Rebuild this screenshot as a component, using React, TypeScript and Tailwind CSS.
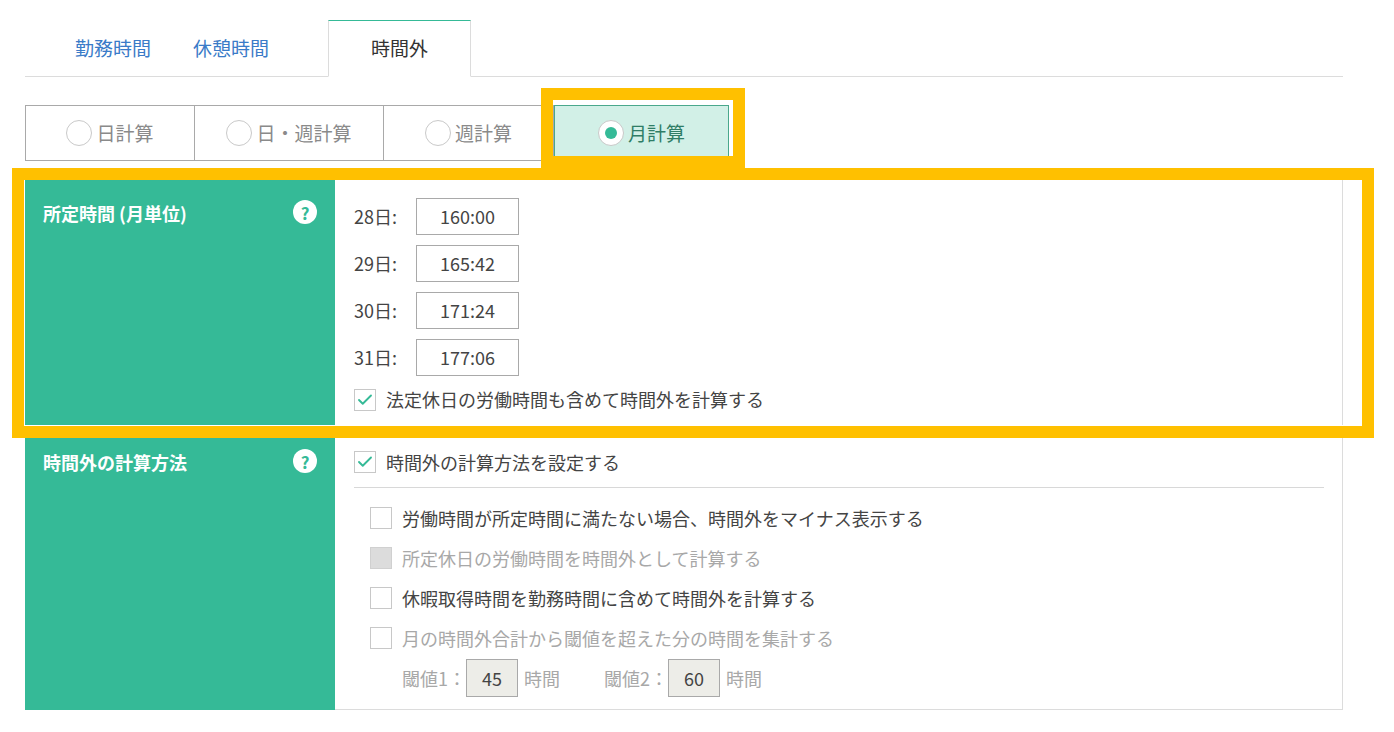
import { Check } from 'lucide-react'

const font = { fontFamily: '"Noto Sans CJK JP", "Noto Sans", sans-serif' }

function Radio({ label, checked }: { label: string; checked?: boolean }) {
  return (
    <div
      className={`flex items-center justify-center gap-1 h-full border ${
        checked ? 'bg-[#d2f0e7] border-[#4aa88c] text-[#2f7d66]' : 'border-[#a9a9a9] text-[#8a8a8a] bg-white'
      }`}
    >
      <span className="w-[26px] h-[26px] rounded-full border border-[#c9c9c9] bg-white flex items-center justify-center">
        {checked && <span className="w-[12px] h-[12px] rounded-full bg-[#35ba97]" />}
      </span>
      <span className="text-[19px]">{label}</span>
    </div>
  )
}

function Box({ checked, disabled }: { checked?: boolean; disabled?: boolean }) {
  return (
    <span
      className={`w-[22px] h-[22px] border flex items-center justify-center shrink-0 ${
        disabled ? 'bg-[#dcdcdc] border-[#d0d0d0]' : 'bg-white border-[#c8c8c8]'
      }`}
    >
      {checked && <Check className="w-[18px] h-[18px] text-[#35ba97]" strokeWidth={2.5} />}
    </span>
  )
}

function Help() {
  return (
    <span className="w-[24px] h-[24px] rounded-full bg-white text-[#35ba97] font-bold text-[17px] flex items-center justify-center leading-none">
      ?
    </span>
  )
}

export default function App() {
  return (
    <div className="relative w-[1394px] h-[732px] bg-white text-[#444]" style={font}>
      <div className="px-[25px] pt-[20px] w-[1368px]">
        <div className="flex h-[57px] border-b border-[#dcdcdc] text-[19px]">
          <div className="w-[50px]" />
          <div className="w-[118px] flex items-center text-[#3a7bc8]">勤務時間</div>
          <div className="w-[135px] flex items-center text-[#3a7bc8]">休憩時間</div>
          <div className="w-[143px] -mb-px flex items-center justify-center border border-b-white border-[#dcdcdc] border-t-[#35ba97] bg-white text-[#333]">
            時間外
          </div>
        </div>

        <div className="flex h-[56px] mt-[28px]">
          <div className="w-[170px]"><Radio label="日計算" /></div>
          <div className="w-[190px] -ml-px"><Radio label="日・週計算" /></div>
          <div className="w-[171px] -ml-px"><Radio label="週計算" /></div>
          <div className="w-[175px]"><Radio label="月計算" checked /></div>
        </div>

        <div className="mt-[19px] flex">
          <div className="w-[310px] bg-[#35ba97] text-white font-bold text-[18px] flex justify-between items-start px-[18px] pt-[20px]">
            <span>所定時間 (月単位)</span>
            <Help />
          </div>
          <div className="flex-1 border-r border-[#dcdcdc] pl-[19px] pt-[18px] pb-[12px] text-[18px]">
            {[
              ['28日:', '160:00'],
              ['29日:', '165:42'],
              ['30日:', '171:24'],
              ['31日:', '177:06'],
            ].map(([d, v]) => (
              <div key={d} className="flex items-center gap-[6px] h-[37px] mb-[10px]">
                <span className="w-[56px]">{d}</span>
                <span className="w-[103px] h-[37px] border border-[#a9a9a9] flex items-center justify-center">{v}</span>
              </div>
            ))}
            <div className="flex items-center gap-[10px]">
              <Box checked />
              <span>法定休日の労働時間も含めて時間外を計算する</span>
            </div>
          </div>
        </div>

        <div className="flex mt-[12px] h-[273px]">
          <div className="w-[310px] bg-[#35ba97] text-white font-bold text-[18px] flex justify-between items-start px-[18px] pt-[12px]">
            <span>時間外の計算方法</span>
            <Help />
          </div>
          <div className="flex-1 border border-l-0 border-t-0 border-[#dcdcdc] pt-[12px] pl-[19px] pr-[18px] text-[18px]">
            <div className="flex items-center gap-[10px] h-[26px]">
              <Box checked />
              <span>時間外の計算方法を設定する</span>
            </div>
            <div className="border-t border-[#d8d8d8] mt-[12px] mb-[10px]" />
            <div className="pl-[16px] flex flex-col">
              <div className="flex items-center gap-[10px] h-[40px]">
                <Box /><span>労働時間が所定時間に満たない場合、時間外をマイナス表示する</span>
              </div>
              <div className="flex items-center gap-[10px] h-[40px] text-[#a8a8a8]">
                <Box disabled /><span>所定休日の労働時間を時間外として計算する</span>
              </div>
              <div className="flex items-center gap-[10px] h-[40px]">
                <Box /><span>休暇取得時間を勤務時間に含めて時間外を計算する</span>
              </div>
              <div className="flex items-center gap-[10px] h-[40px] text-[#a8a8a8]">
                <Box /><span>月の時間外合計から閾値を超えた分の時間を集計する</span>
              </div>
              <div className="flex items-center h-[40px] text-[#a8a8a8] pl-[32px]">
                <span>閾値1：</span>
                <span className="w-[52px] h-[38px] border border-[#a9a9a9] bg-[#ededE8] text-[#444] flex items-center justify-center">45</span>
                <span className="ml-[6px]">時間</span>
                <span className="ml-[44px]">閾値2：</span>
                <span className="w-[52px] h-[38px] border border-[#a9a9a9] bg-[#ededE8] text-[#444] flex items-center justify-center">60</span>
                <span className="ml-[6px]">時間</span>
              </div>
            </div>
          </div>
        </div>
      </div>

      <div className="absolute left-[541px] top-[88px] w-[204px] h-[80px] border-[12px] border-[#ffc000] pointer-events-none" />
      <div className="absolute left-[12px] top-[168px] w-[1362px] h-[270px] border-[12px] border-[#ffc000] pointer-events-none" />
    </div>
  )
}
